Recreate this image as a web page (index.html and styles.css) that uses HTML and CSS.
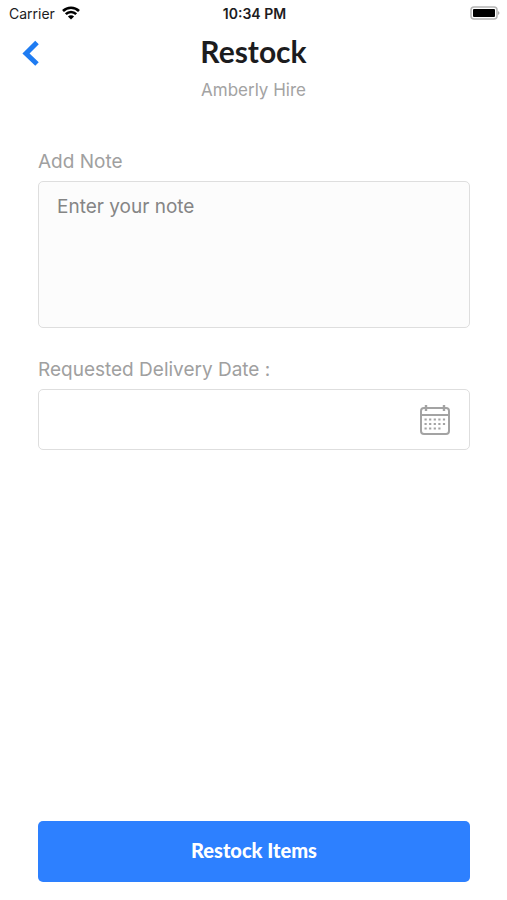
FILE: index.html
```html
<!DOCTYPE html>
<html lang="en">
<head>
<meta charset="utf-8">
<meta name="viewport" content="width=device-width, initial-scale=1">
<title>Restock</title>
<link rel="stylesheet" href="styles.css">
</head>
<body>
<div class="status">
  <div class="carrier">
    <span>Carrier</span>
    <svg width="18" height="14" viewBox="0 0 18 14" aria-hidden="true">
      <g fill="none" stroke="#000" stroke-width="2.6">
        <path d="M1 5a11.4 11.4 0 0 1 16 0"/>
        <path d="M3.8 8.2a7.4 7.4 0 0 1 10.4 0"/>
      </g>
      <path d="M9 13.6 5.9 10.5a4.4 4.4 0 0 1 6.2 0z"/>
    </svg>
  </div>
  <span class="time">10:34 PM</span>
  <svg class="battery" width="30" height="14" viewBox="0 0 30 14" aria-hidden="true">
    <rect x="1" y="1" width="26" height="12" rx="3" fill="#fff" stroke="#b4b4b4" stroke-width="1.5"/>
    <rect x="3" y="3" width="22" height="8" rx="1"/>
    <path d="M28 5q3 2 0 4z" fill="#aaa"/>
  </svg>
</div>
<header class="header">
  <button class="back" type="button" aria-label="Back">
    <svg width="18" height="26" viewBox="0 0 18 26" aria-hidden="true"><path d="M15 2.5 4 13.5l11 10.5" fill="none" stroke="#1f7cf2" stroke-width="5"/></svg>
  </button>
  <div class="heading">
    <h1>Restock</h1>
    <p>Amberly Hire</p>
  </div>
</header>
<main class="content">
  <form class="form">
    <label for="note">Add Note</label>
    <textarea class="box note" id="note" placeholder="Enter your note"></textarea>
    <label for="date">Requested Delivery Date :</label>
    <div class="box date">
      <input id="date" type="text">
      <button class="pick" type="button" aria-label="Choose date">
        <svg width="32" height="32" viewBox="0 0 32 32" fill="none" stroke="#a3a3a3" aria-hidden="true">
          <rect x="2" y="4" width="28" height="26" rx="3" stroke-width="2"/>
          <path d="M2 11h28" stroke-width="2"/>
          <path d="M7 1v6M25 1v6" stroke-width="2.4"/>
          <path d="M5.5 15.5h21M5.5 20h21M5.5 24.5h17" stroke-width="2.2" stroke-dasharray="2.2 2.4"/>
        </svg>
      </button>
    </div>
    <button class="submit" type="submit">Restock Items</button>
  </form>
</main>
</body>
</html>
```
FILE: styles.css
```css
* {
  box-sizing: border-box;
}

body {
  display: flex;
  flex-direction: column;
  min-height: 100vh;
  margin: 0;
  background: #fff;
  color: #1c1c1e;
  font-family: Inter, "Liberation Sans", sans-serif;
}

button {
  padding: 0;
  border: 0;
  background: none;
}

svg {
  display: block;
}

.status {
  display: grid;
  grid-template-columns: 1fr auto 1fr;
  align-items: center;
  height: 26px;
  padding: 0 7px 0 9px;
  font-size: 14px;
}

.carrier {
  display: flex;
  align-items: center;
  gap: 7px;
}

.time {
  font-weight: 600;
}

.battery {
  justify-self: end;
}

.header {
  display: grid;
  grid-template-columns: 56px 1fr 56px;
  align-items: start;
}

.back {
  justify-self: start;
  margin: 14px 0 0 22px;
}

.heading {
  text-align: center;
}

h1 {
  margin: 5px 0 0;
  font: 700 30px/40px Lato, sans-serif;
}

.heading p {
  margin: 7px 0 0;
  color: #a3a3a3;
  font-size: 17px;
  line-height: 24px;
}

.content {
  display: flex;
  flex: 1;
  padding: 48px 37px 18px 38px;
}

.form {
  display: flex;
  flex: 1;
  flex-direction: column;
}

label {
  margin-bottom: 7px;
  color: #a0a0a0;
  font-size: 19px;
  line-height: 24px;
}

.box {
  border: 1px solid #dedede;
  border-radius: 5px;
}

.note {
  height: 147px;
  margin-bottom: 30px;
  padding: 13px 18px;
  background: #fcfcfc;
  font: 19px/24px Inter, sans-serif;
  resize: none;
}

.note::placeholder {
  color: #858585;
}

.date {
  display: flex;
  align-items: center;
  height: 61px;
  padding-right: 18px;
}

.date input {
  flex: 1;
  min-width: 0;
  height: 100%;
  padding: 0 18px;
  border: 0;
  background: none;
  font: 19px/24px Inter, sans-serif;
}

.submit {
  height: 61px;
  margin-top: auto;
  padding-bottom: 4px;
  border-radius: 5px;
  background: #2d80ff;
  color: #fff;
  font: 900 20px/24px Lato, sans-serif;
}
```
